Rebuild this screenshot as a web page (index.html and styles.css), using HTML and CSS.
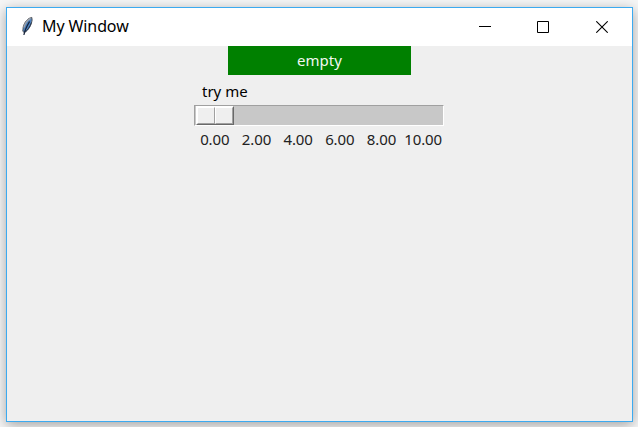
FILE: index.html
```html
<!DOCTYPE html>
<html lang="en">
<head>
<meta charset="utf-8">
<title>My Window</title>
<link rel="stylesheet" href="styles.css">
</head>
<body>
<main class="window">
  <header class="titlebar">
    <svg class="feather" width="14" height="22" viewBox="0 0 14 22">
      <path d="M11.8 1.4C8 2 4.4 6 3.2 11L2.8 15.3 4.3 16.6C8.5 14.5 11.5 9 12.1 4Z" fill="#4c82c0" stroke="#59595c" stroke-width="1"/>
      <path d="M10.6 2.4C7.4 4 5 7.5 3.9 11.5" fill="none" stroke="#a0a4aa" stroke-width="1.4"/>
      <path d="M9.6 5.5C7.5 9 5 13 3.9 19" fill="none" stroke="#182338" stroke-width="1.2"/>
      <path d="M11.4 6.5C10 11 7.5 14.2 4.6 16.3" fill="none" stroke="#28384f" stroke-width="1"/>
    </svg>
    <h1 class="title">My Window</h1>
    <div class="controls">
      <svg width="12" height="12" viewBox="0 0 12 12"><path d="M0 5.5H12" stroke="#000"/></svg>
      <svg width="12" height="12" viewBox="0 0 12 12"><path d="M.5 .5H11.5V11.5H.5Z" fill="none" stroke="#000"/></svg>
      <svg width="12" height="12" viewBox="0 0 12 12"><path d="M.3 .3 11.7 11.7M11.7 .3 .3 11.7" stroke="#000" stroke-width="1.1"/></svg>
    </div>
  </header>
  <section class="content">
    <div class="label">empty</div>
    <div class="scale">
      <div class="caption">try me</div>
      <div class="trough"><div class="slider"><i></i><i></i></div></div>
      <div class="ticks"><span>0.00</span><span>2.00</span><span>4.00</span><span>6.00</span><span>8.00</span><span>10.00</span></div>
    </div>
  </section>
</main>
</body>
</html>
```

FILE: styles.css
```css
* { box-sizing: border-box; }
body {
  margin: 0;
  height: 427px;
  padding: 7px 5px 5px 6px;
  overflow: hidden;
  background: #f6f6f6;
  font-family: "Noto Sans", "Open Sans", sans-serif;
  color: #000;
}
.window {
  width: 627px;
  height: 415px;
  border: 1px solid #3caaf0;
  background: #efefef;
  box-shadow: 0 3px 12px rgba(0, 0, 0, .34);
}
.titlebar {
  display: flex;
  align-items: center;
  height: 38px;
  padding: 0 24px 0 13px;
  background: #fff;
}
.title {
  margin: 0 0 2px 8px;
  font-size: 16px;
  font-weight: 400;
  line-height: 22px;
  letter-spacing: -.1px;
}
.controls { display: flex; margin-left: auto; }
.controls svg:nth-child(2) { margin: 0 47px 0 46px; }
.content {
  display: flex;
  flex-direction: column;
  align-items: flex-start;
  padding-left: 187px;
}
.label {
  width: 183px;
  height: 29px;
  margin-left: 34px;
  background: #008000;
  color: #f2f8f2;
  font-size: 15px;
  line-height: 29px;
  text-align: center;
}
.scale { width: 250px; margin-top: 7px; font-size: 15px; }
.caption { height: 23px; padding-left: 8px; line-height: 19px; }
.trough {
  height: 21px;
  padding: 0 1px;
  border: 1px solid;
  border-color: #a0a0a0 #fff #fff #a0a0a0;
  background: #c8c8c8;
}
.slider {
  display: flex;
  width: 38px;
  height: 19px;
  border: 1px solid;
  border-color: #fff #696969 #696969 #fff;
}
.slider i {
  flex: 1;
  border: 1px solid;
  border-color: #fff #a0a0a0 #a0a0a0 #fff;
  background: #efefef;
}
.ticks {
  display: grid;
  grid-template-columns: repeat(6, 1fr);
  padding-top: 3px;
  line-height: 20px;
  font-size: 15px;
  letter-spacing: -.1px;
  text-align: center;
  color: #222;
}
```
